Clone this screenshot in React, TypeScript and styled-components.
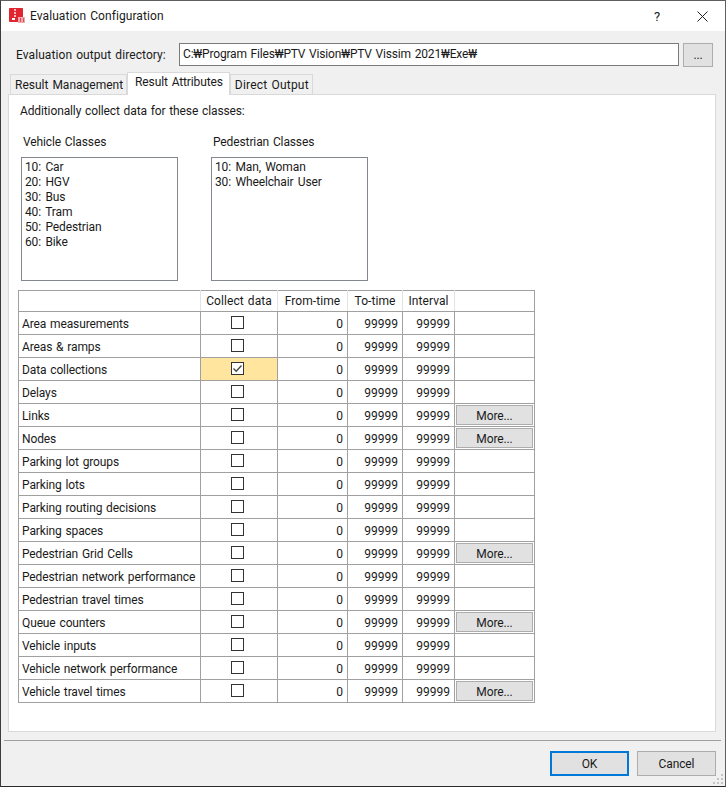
import React from 'react';
import styled, { createGlobalStyle } from 'styled-components';

const Global = createGlobalStyle`
  html, body { margin: 0; padding: 0; background: #2b2b2b; }
  * { box-sizing: border-box; }
`;

const Window = styled.div`
  width: 726px;
  height: 787px;
  display: flex;
  flex-direction: column;
  background: #f0f0f0;
  border: 1px solid #5f5f5f;
  border-left-color: #3c3c3c;
  border-bottom-color: #2a2a2a;
  font-family: Roboto, "Noto Sans", sans-serif;
  font-size: 12px;
  word-spacing: 1px;
  letter-spacing: -0.12px;
  color: #1a1a1a;
  position: relative;
`;

const TitleBar = styled.div`
  height: 30px;
  flex: none;
  background: #fff;
  display: flex;
  align-items: center;
  padding-left: 8px;
`;
const TitleText = styled.div`
  margin-left: 5px;
  flex: 1;
  margin-top: -1px;
  letter-spacing: 0.08px;
`;
const TitleBtn = styled.div`
  width: 46px;
  height: 30px;
  display: flex;
  align-items: center;
  justify-content: center;
  font-size: 13px;
`;
const HelpBtn = styled(TitleBtn)`
  margin-right: -1px;
`;

const DirRow = styled.div`
  display: flex;
  align-items: center;
  height: 23px;
  margin-top: 12px;
  padding-left: 15px;
`;
const DirLabel = styled.div`
  width: 163px;
  flex: none;
  letter-spacing: 0.08px;
`;
const DirInput = styled.div`
  width: 500px;
  height: 23px;
  background: #fff;
  border: 1px solid #7a7a7a;
  padding: 0 3px;
  line-height: 20px;
  letter-spacing: -0.18px;
  white-space: nowrap;
  overflow: hidden;
  flex: none;
`;
const BrowseBtn = styled.div`
  width: 30px;
  height: 24px;
  margin-left: 4px;
  background: #e1e1e1;
  border: 1px solid #adadad;
  text-align: center;
  line-height: 22px;
  flex: none;
`;

const Tabs = styled.div`
  display: flex;
  align-items: flex-end;
  height: 23px;
  margin-top: 6px;
  padding-left: 9px;
  position: relative;
  z-index: 1;
`;
const Tab = styled.div<{ $active?: boolean; $spacing?: number }>`
  height: ${p => (p.$active ? 23 : 21)}px;
  padding: ${p => (p.$active ? '0 6px 0 7px' : '0 3px 0 4px')};
  background: ${p => (p.$active ? '#fff' : '#f0f0f0')};
  border: 1px solid #d9d9d9;
  border-bottom: ${p => (p.$active ? 'none' : '1px solid #d9d9d9')};
  line-height: ${p => (p.$active ? 19 : 20)}px;
  letter-spacing: ${p => p.$spacing ?? -0.12}px;
  position: relative;
  z-index: ${p => (p.$active ? 2 : 1)};
  white-space: nowrap;
`;

const Pane = styled.div`
  margin: -1px 10px 0 7px;
  width: 708px;
  height: 638px;
  background: #fff;
  border: 1px solid #d9d9d9;
  padding: 7px 0 0 11px;
`;
const Intro = styled.div`
  height: 18px;
  line-height: 18px;
`;

const ClassGroups = styled.div`
  display: flex;
  margin-top: 12px;
  padding-left: 1px;
`;
const ClassGroup = styled.div`
  width: 190px;
  display: flex;
  flex-direction: column;
`;
const ClassLabel = styled.div`
  height: 18px;
  line-height: 18px;
  padding-left: 2px;
  margin-top: 1px;
`;
const ListBox = styled.div`
  width: 157px;
  height: 124px;
  margin-top: 6px;
  border: 1px solid #828790;
  padding: 2px 3px;
  background: #fff;
  word-spacing: 1.5px;
`;
const ListItem = styled.div`
  height: 15px;
  line-height: 15px;
`;

const Table = styled.table`
  margin: 9px 0 0 -2px;
  border-collapse: collapse;
  table-layout: fixed;
  width: 517px;
`;
const Th = styled.th`
  height: 21px;
  font-weight: 400;
  letter-spacing: 0.08px;
  border: 1px solid #a0a0a0;
  border-left-color: #e3e3e3;
  border-right-color: #e3e3e3;
  padding: 0;
  text-align: center;
  line-height: 18px;
  &:first-child { border-left-color: #a0a0a0; }
  &:last-child { border-right-color: #a0a0a0; }
`;
const Td = styled.td<{ $sel?: boolean }>`
  height: 23px;
  border: 1px solid #a0a0a0;
  padding: 0;
  background: ${p => (p.$sel ? '#ffe59d' : '#fff')};
`;
const LabelCell = styled(Td)`
  padding: 2px 0 0 3px;
  white-space: nowrap;
`;
const NumCell = styled(Td)`
  text-align: right;
  padding: 2px 4px 0 0;
  letter-spacing: 0;
`;
const CheckWrap = styled.div`
  display: flex;
  justify-content: center;
  margin: -2px 3px 0 0;
`;
const CheckBox = styled.div`
  width: 13px;
  height: 13px;
  border: 1px solid #333;
  background: #fff;
  display: flex;
  align-items: center;
  justify-content: center;
`;
const MoreBtn = styled.div`
  height: 20px;
  margin: 0 1px;
  background: #e1e1e1;
  border: 1px solid #adadad;
  text-align: center;
  line-height: 20px;
`;

const Separator = styled.div`
  height: 1px;
  background: #a0a0a0;
  margin: 8px 4px 0 3px;
`;
const Footer = styled.div`
  display: flex;
  justify-content: flex-end;
  gap: 8px;
  margin-top: 10px;
  padding-right: 9px;
`;
const DialogBtn = styled.div<{ $def?: boolean }>`
  width: 79px;
  height: 25px;
  background: #e1e1e1;
  border: ${p => (p.$def ? '2px solid #0078d7' : '1px solid #adadad')};
  text-align: center;
  line-height: ${p => (p.$def ? 23 : 25)}px;
`;
const Grip = styled.svg`
  position: absolute;
  right: 0;
  bottom: 0;
`;

const rows: { name: string; checked?: boolean; more?: boolean }[] = [
  { name: 'Area measurements' },
  { name: 'Areas & ramps' },
  { name: 'Data collections', checked: true },
  { name: 'Delays' },
  { name: 'Links', more: true },
  { name: 'Nodes', more: true },
  { name: 'Parking lot groups' },
  { name: 'Parking lots' },
  { name: 'Parking routing decisions' },
  { name: 'Parking spaces' },
  { name: 'Pedestrian Grid Cells', more: true },
  { name: 'Pedestrian network performance' },
  { name: 'Pedestrian travel times' },
  { name: 'Queue counters', more: true },
  { name: 'Vehicle inputs' },
  { name: 'Vehicle network performance' },
  { name: 'Vehicle travel times', more: true },
];

const AppIcon = () => (
  <svg width="16" height="16" viewBox="0 0 16 16">
    <rect x="0" y="0" width="14" height="14" fill="#e1252f" rx="1" />
    <rect x="5" y="1" width="2" height="2" fill="#f7b8bc" />
    <rect x="5" y="4" width="2" height="2" fill="#f7b8bc" />
    <rect x="5" y="7" width="2" height="2" fill="#f7b8bc" />
    <rect x="3" y="10" width="3" height="2" fill="#fff" />
    <rect x="9" y="9" width="7" height="6" fill="#f0a8ae" />
    <rect x="11" y="10" width="1" height="4" fill="#d9505a" />
    <rect x="14" y="10" width="1" height="4" fill="#d9505a" />
  </svg>
);

export default function App() {
  return (
    <Window>
      <Global />
      <TitleBar>
        <AppIcon />
        <TitleText>Evaluation Configuration</TitleText>
        <HelpBtn>?</HelpBtn>
        <TitleBtn>
          <svg width="11" height="11" viewBox="0 0 11 11">
            <path d="M0.5 0.5L10.5 10.5M10.5 0.5L0.5 10.5" stroke="#222" fill="none" />
          </svg>
        </TitleBtn>
      </TitleBar>
      <DirRow>
        <DirLabel>Evaluation output directory:</DirLabel>
        <DirInput>C:₩Program Files₩PTV Vision₩PTV Vissim 2021₩Exe₩</DirInput>
        <BrowseBtn>...</BrowseBtn>
      </DirRow>
      <Tabs>
        <Tab $spacing={0}>Result Management</Tab>
        <Tab $active>Result Attributes</Tab>
        <Tab $spacing={0.2}>Direct Output</Tab>
      </Tabs>
      <Pane>
        <Intro>Additionally collect data for these classes:</Intro>
        <ClassGroups>
          <ClassGroup>
            <ClassLabel>Vehicle Classes</ClassLabel>
            <ListBox>
              {['10: Car', '20: HGV', '30: Bus', '40: Tram', '50: Pedestrian', '60: Bike'].map(t => (
                <ListItem key={t}>{t}</ListItem>
              ))}
            </ListBox>
          </ClassGroup>
          <ClassGroup>
            <ClassLabel>Pedestrian Classes</ClassLabel>
            <ListBox>
              {['10: Man, Woman', '30: Wheelchair User'].map(t => (
                <ListItem key={t}>{t}</ListItem>
              ))}
            </ListBox>
          </ClassGroup>
        </ClassGroups>
        <Table>
          <colgroup>
            <col style={{ width: 182 }} />
            <col style={{ width: 77 }} />
            <col style={{ width: 70 }} />
            <col style={{ width: 55 }} />
            <col style={{ width: 52 }} />
            <col style={{ width: 80 }} />
          </colgroup>
          <thead>
            <tr>
              <Th />
              <Th>Collect data</Th>
              <Th>From-time</Th>
              <Th>To-time</Th>
              <Th>Interval</Th>
              <Th />
            </tr>
          </thead>
          <tbody>
            {rows.map(r => (
              <tr key={r.name}>
                <LabelCell>{r.name}</LabelCell>
                <Td $sel={r.checked}>
                  <CheckWrap>
                    <CheckBox>
                      {r.checked && (
                        <svg width="11" height="11" viewBox="0 0 11 11">
                          <path d="M1.5 5.5L4.2 8.2L9.5 2.5" stroke="#444" strokeWidth="1.3" fill="none" />
                        </svg>
                      )}
                    </CheckBox>
                  </CheckWrap>
                </Td>
                <NumCell>0</NumCell>
                <NumCell>99999</NumCell>
                <NumCell>99999</NumCell>
                <Td>{r.more && <MoreBtn>More...</MoreBtn>}</Td>
              </tr>
            ))}
          </tbody>
        </Table>
      </Pane>
      <Separator />
      <Footer>
        <DialogBtn $def>OK</DialogBtn>
        <DialogBtn>Cancel</DialogBtn>
      </Footer>
      <Grip width="12" height="12" viewBox="0 0 12 12">
        <g fill="#c4c4c4">
          <rect x="8" y="0" width="2" height="2" />
          <rect x="4" y="4" width="2" height="2" />
          <rect x="8" y="4" width="2" height="2" />
          <rect x="0" y="8" width="2" height="2" />
          <rect x="4" y="8" width="2" height="2" />
          <rect x="8" y="8" width="2" height="2" />
        </g>
      </Grip>
    </Window>
  );
}
